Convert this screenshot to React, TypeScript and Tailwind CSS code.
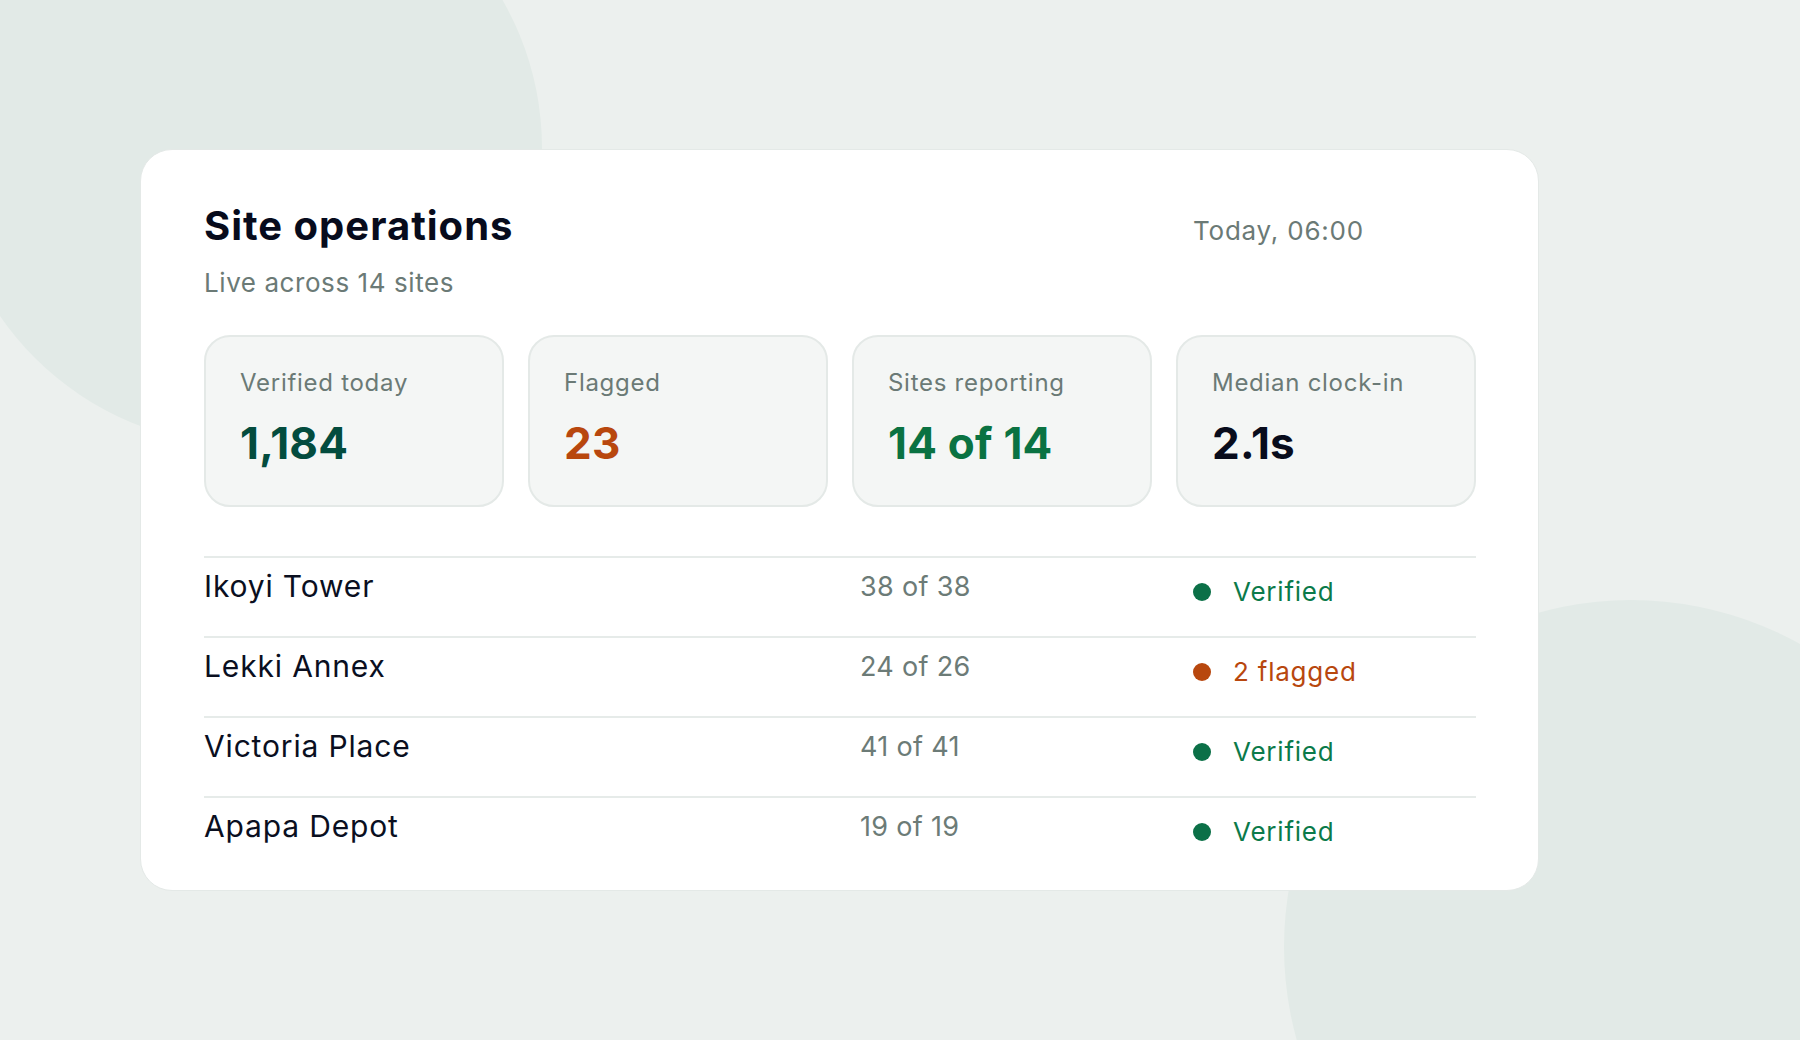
import React from "react";

type Stat = { label: string; value: string; tone: string };
type Site = { name: string; count: string; status: string; ok: boolean };

const stats: Stat[] = [
  { label: "Verified today", value: "1,184", tone: "text-[#034c3e]" },
  { label: "Flagged", value: "23", tone: "text-[#b8470e]" },
  { label: "Sites reporting", value: "14 of 14", tone: "text-[#0a7242]" },
  { label: "Median clock-in", value: "2.1s", tone: "text-[#080c1c]" },
];

const sites: Site[] = [
  { name: "Ikoyi Tower", count: "38 of 38", status: "Verified", ok: true },
  { name: "Lekki Annex", count: "24 of 26", status: "2 flagged", ok: false },
  { name: "Victoria Place", count: "41 of 41", status: "Verified", ok: true },
  { name: "Apapa Depot", count: "19 of 19", status: "Verified", ok: true },
];

// One tile of the summary strip: muted label over a big coloured figure.
function StatTile({ stat }: { stat: Stat }) {
  return (
    <div className="h-[172px] rounded-[26px] border-2 border-[#e4e9e7] bg-[#f4f6f5] pl-[34px] pt-[31px]">
      <div className="text-[24px] leading-[30px] tracking-[0.03em] text-[#6b7a76]">{stat.label}</div>
      <div className={`mt-[19px] text-[44px] font-bold leading-[52px] tracking-[0.005em] ${stat.tone}`}>
        {stat.value}
      </div>
    </div>
  );
}

function SiteRow({ site }: { site: Site }) {
  return (
    <div className="flex h-[80px] items-start border-t-2 border-[#e6ebe9]">
      <div className="w-[656px] pt-[10px] text-[30px] leading-[36px] tracking-[0.028em] text-[#0a0f1f]">
        {site.name}
      </div>
      <div className="w-[333px] pt-[11px] text-[27px] leading-[36px] tracking-[0.012em] text-[#6c7b77]">
        {site.count}
      </div>
      <div className="flex items-center gap-[22px] pt-[16px]">
        <span
          className={`h-[18px] w-[18px] rounded-full ${site.ok ? "bg-[#0b7047]" : "bg-[#b8470e]"}`}
        />
        <span
          className={`text-[26px] leading-[36px] tracking-[0.03em] ${site.ok ? "text-[#0b7a4a]" : "text-[#b8470e]"}`}
        >
          {site.status}
        </span>
      </div>
    </div>
  );
}

export default function App() {
  return (
    <div className="relative h-[1040px] w-full overflow-hidden bg-[#ecf0ee] font-['Inter','Noto_Sans',sans-serif]">
      {/* soft background blobs */}
      <div className="absolute left-[-52px] top-[-149px] h-[594px] w-[594px] rounded-full bg-[#e2eae7]" />
      <div className="absolute left-[1284px] top-[600px] h-[694px] w-[694px] rounded-full bg-[#e2eae7]" />

      <div className="relative pl-[140px] pt-[149px]">
        <section className="h-[742px] w-[1399px] rounded-[32px] border border-[#e4e9e7] bg-white pl-[63px] pr-[62px] pt-[52px]">
          <header className="flex items-baseline">
            <div className="w-[989px]">
              <h1 className="text-[40px] font-bold leading-[48px] tracking-[0.025em] text-[#070b1c]">
                Site operations
              </h1>
              <p className="mt-[17px] text-[26px] leading-[32px] tracking-[0.022em] text-[#6b7a76]">
                Live across 14 sites
              </p>
            </div>
            <div className="text-[26px] tracking-[0.03em] text-[#6b7a76]">Today, 06:00</div>
          </header>

          <div className="mt-[36px] grid grid-cols-4 gap-6">
            {stats.map((s) => (
              <StatTile key={s.label} stat={s} />
            ))}
          </div>

          <div className="mt-[49px]">
            {sites.map((s) => (
              <SiteRow key={s.name} site={s} />
            ))}
          </div>
        </section>
      </div>
    </div>
  );
}
